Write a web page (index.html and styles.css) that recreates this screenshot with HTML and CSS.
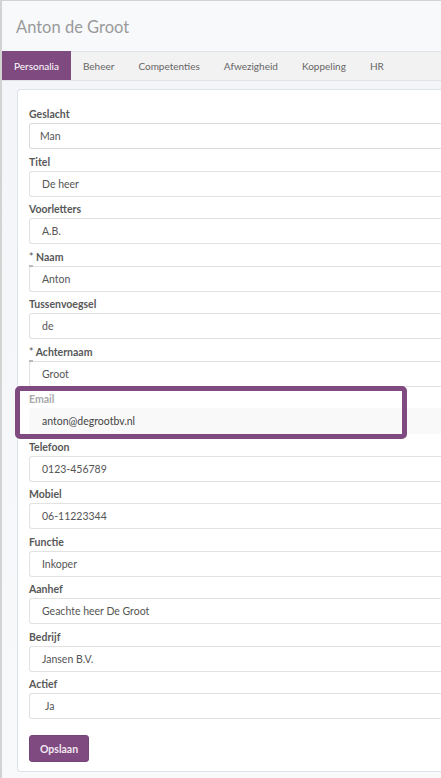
FILE: index.html
```html
<!DOCTYPE html>
<html lang="nl">
<head>
<meta charset="utf-8">
<title>Anton de Groot</title>
<link rel="stylesheet" href="styles.css">
</head>
<body>
<div class="page">
  <h1 class="title">Anton de Groot</h1>
  <nav class="tabs">
    <span class="tab active">Personalia</span>
    <span class="tab">Beheer</span>
    <span class="tab">Competenties</span>
    <span class="tab">Afwezigheid</span>
    <span class="tab">Koppeling</span>
    <span class="tab">HR</span>
  </nav>
  <div class="content">
    <div class="panel">
      <div class="field"><label class="lbl">Geslacht</label><div class="inp sel">Man</div></div>
      <div class="field"><label class="lbl">Titel</label><div class="inp">De heer</div></div>
      <div class="field"><label class="lbl">Voorletters</label><div class="inp">A.B.</div></div>
      <div class="field"><label class="lbl"><span class="req">*</span> Naam</label><div class="inp">Anton</div></div>
      <div class="field"><label class="lbl">Tussenvoegsel</label><div class="inp">de</div></div>
      <div class="field"><label class="lbl"><span class="req">*</span> Achternaam</label><div class="inp">Groot</div></div>
      <div class="field"><label class="lbl disabled">Email</label><div class="inp inp-disabled">anton@degrootbv.nl</div></div>
      <div class="field"><label class="lbl">Telefoon</label><div class="inp">0123-456789</div></div>
      <div class="field"><label class="lbl">Mobiel</label><div class="inp">06-11223344</div></div>
      <div class="field"><label class="lbl">Functie</label><div class="inp">Inkoper</div></div>
      <div class="field"><label class="lbl">Aanhef</label><div class="inp">Geachte heer De Groot</div></div>
      <div class="field"><label class="lbl">Bedrijf</label><div class="inp">Jansen B.V.</div></div>
      <div class="field"><label class="lbl">Actief</label><div class="inp sel2">Ja</div></div>
      <button class="btn" type="button">Opslaan</button>
    </div>
  </div>
  <div class="highlight"></div>
</div>
</body>
</html>
```
FILE: styles.css
```css
html, body {
  margin: 0;
  padding: 0;
  overflow: hidden;
}
body {
  background: #f8f9fb;
  font-family: Lato, "Open Sans", "Liberation Sans", sans-serif;
}
.page {
  position: relative;
  width: 100%;
  height: 778px;
  border-left: 2px solid #d3d3d3;
  border-top: 1px solid #d3d3d3;
  box-sizing: border-box;
}
.title {
  margin: 0;
  height: 50px;
  padding: 15px 0 0 14px;
  box-sizing: border-box;
  font-size: 16.5px;
  font-weight: 400;
  color: #9a9a9a;
  line-height: 22px;
}
.tabs {
  display: flex;
  height: 30px;
  background: #f2f2f2;
  border-top: 1px solid #e1e4e8;
  border-bottom: 1px solid #dfe3e7;
  box-sizing: border-box;
}
.tab {
  display: flex;
  align-items: center;
  padding: 0 12px;
  font-size: 10px;
  color: #666;
}
.tab.active {
  background: #7f4a80;
  color: #fff;
  margin-top: -1px;
}
.content {
  padding: 8px 0 0 15px;
  background: linear-gradient(#f3f5f8, #f8f9fb);
}
.panel {
  background: #fff;
  border: 1px solid #dde3ea;
  border-right: 0;
  border-radius: 4px 0 0 4px;
  padding: 17px 0 10px 11px;
  height: 683px;
  box-sizing: border-box;
}
.field {
  margin-bottom: 5.5px;
}
.lbl {
  display: block;
  font-size: 10.5px;
  line-height: 14px;
  font-weight: 700;
  color: #585858;
  margin-bottom: 2px;
}
.lbl.disabled {
  color: #a8a8a8;
}
.req {
  display: inline-block;
  position: relative;
  font-weight: 400;
}
.req::after {
  content: "";
  position: absolute;
  left: 0;
  bottom: -3px;
  width: 4px;
  height: 2px;
  background: #bbb;
}
.inp {
  height: 26px;
  box-sizing: border-box;
  border: 1px solid #e2e2e2;
  border-right: 0;
  border-radius: 3px 0 0 3px;
  padding-left: 12px;
  font-size: 10.5px;
  line-height: 24px;
  color: #555;
  background: #fff;
}
.inp.sel {
  padding-left: 10px;
  border-color: #dcdcdc;
}
.inp.sel2 {
  padding-left: 15px;
}
.inp-disabled {
  background: #f9f9f9;
  border-color: #f9f9f9;
  color: #444;
}
.btn {
  margin-top: 10.5px;
  width: 60px;
  height: 27px;
  background: #7f4a80;
  border: 1px solid #77457a;
  border-radius: 3px;
  color: #f2e8f2;
  font-family: inherit;
  font-size: 10.5px;
  font-weight: 700;
  padding: 0;
}
.highlight {
  position: absolute;
  left: 13px;
  top: 385px;
  width: 392px;
  height: 53px;
  border: 5.5px solid #7f4a80;
  border-radius: 5px;
  box-sizing: border-box;
}
```
